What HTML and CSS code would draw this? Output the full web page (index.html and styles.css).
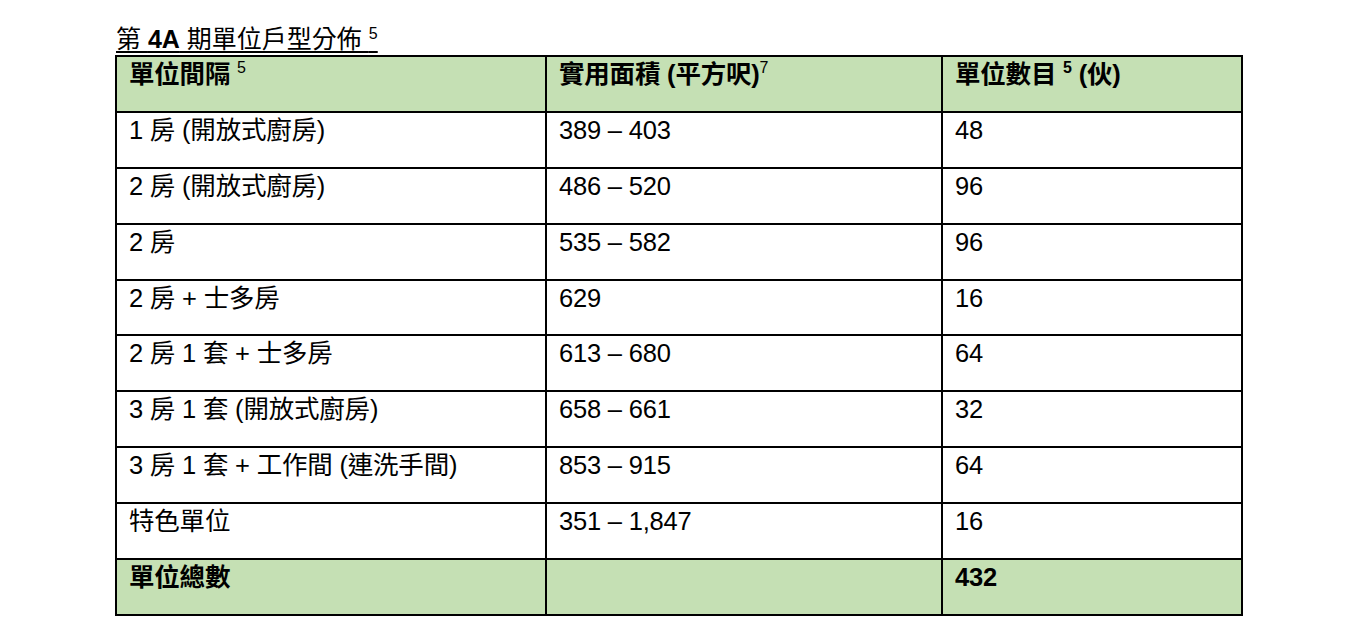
FILE: index.html
```html
<!DOCTYPE html>
<html lang="zh-Hant">
<head>
<meta charset="utf-8">
<link rel="stylesheet" href="styles.css">
</head>
<body>
<div class="page">
  <h1 class="title">第 <b>4A</b> 期單位戶型分佈 <sup>5</sup></h1>
  <table class="units">
    <colgroup>
      <col class="c1"><col class="c2"><col class="c3">
    </colgroup>
    <tr class="head">
      <td>單位間隔 <sup class="thin">5</sup></td>
      <td>實用面積 (平方呎)<sup class="thin">7</sup></td>
      <td>單位數目 <sup>5</sup> (伙)</td>
    </tr>
    <tr><td>1 房 (開放式廚房)</td><td>389 – 403</td><td>48</td></tr>
    <tr><td>2 房 (開放式廚房)</td><td>486 – 520</td><td>96</td></tr>
    <tr><td>2 房</td><td>535 – 582</td><td>96</td></tr>
    <tr><td>2 房 + 士多房</td><td>629</td><td>16</td></tr>
    <tr><td>2 房 1 套 + 士多房</td><td>613 – 680</td><td>64</td></tr>
    <tr><td>3 房 1 套 (開放式廚房)</td><td>658 – 661</td><td>32</td></tr>
    <tr><td>3 房 1 套 + 工作間 (連洗手間)</td><td>853 – 915</td><td>64</td></tr>
    <tr><td>特色單位</td><td>351 – 1,847</td><td>16</td></tr>
    <tr class="head"><td>單位總數</td><td></td><td>432</td></tr>
  </table>
</div>
</body>
</html>
```

FILE: styles.css
```css
html, body {
  margin: 0;
  padding: 0;
  background: #ffffff;
}
body {
  font-family: "Liberation Sans", "Noto Sans CJK TC", sans-serif;
  color: #000;
}
.page {
  padding: 24px 0 0 115px;
}
.title {
  margin: 0 0 0 1px;
  font-size: 25px;
  font-weight: normal;
  line-height: 30px;
  height: 31px;
  text-decoration: underline;
  text-decoration-thickness: 2px;
  text-underline-offset: 3px;
}
.title b {
  font-weight: bold;
}
.title sup {
  font-size: 16px;
  vertical-align: 9px;
  line-height: 0;
}
.units {
  border-collapse: collapse;
  width: 1126px;
  table-layout: fixed;
  border: 2px solid #000;
}
.c1 { width: 430px; }
.c2 { width: 396px; }
.c3 { width: 300px; }
.units td {
  border: 2px solid #000;
  height: 45.9px;
  padding: 2px 12px 6px 12px;
  vertical-align: top;
  font-size: 25.5px;
  line-height: 30px;
  letter-spacing: -0.2px;
}
.units tr.head td {
  background: #c5e0b4;
  font-weight: bold;
}
.units sup {
  font-size: 16px;
  line-height: 0;
  vertical-align: 10px;
}
.units sup.thin {
  font-weight: normal;
}
```
